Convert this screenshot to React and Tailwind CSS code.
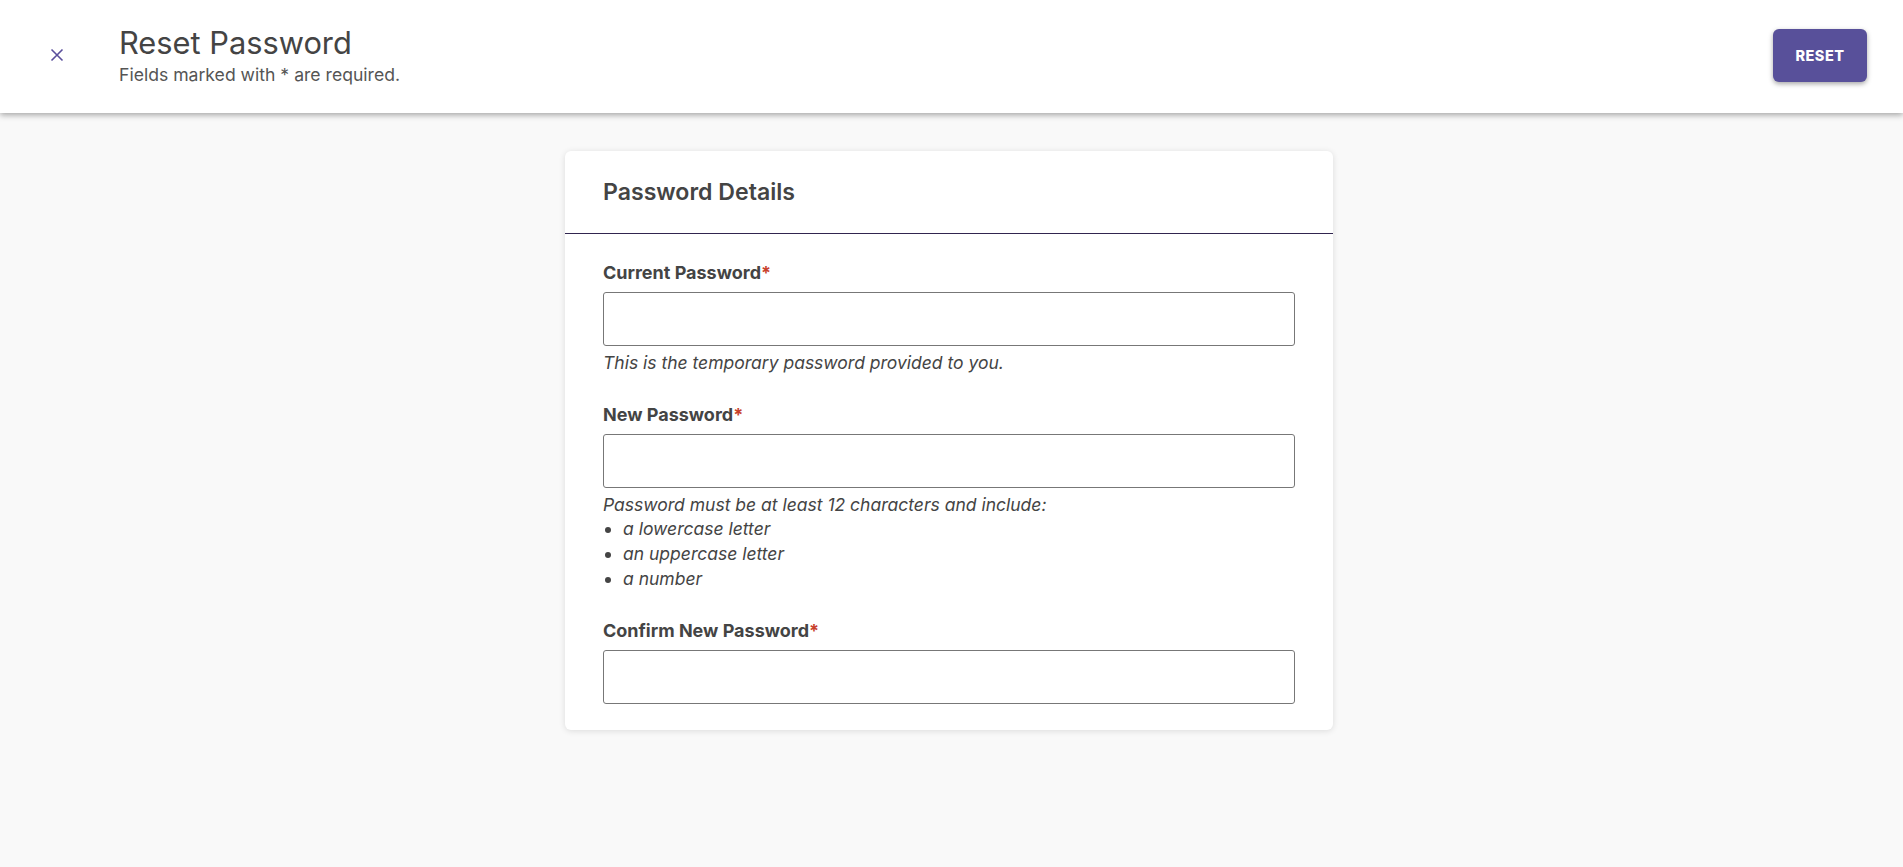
import React from 'react';

function Field({ label, help }) {
  return (
    <div>
      <label className="block text-[18px] leading-[24.6px] font-bold text-[#444]">
        {label}
        <span className="text-[#c8412b]">*</span>
      </label>
      <input
        type="password"
        className="mt-[6.5px] block w-full h-[54px] rounded-[3px] border border-[#777] bg-white px-3 outline-none"
      />
      {help}
    </div>
  );
}

export default function App() {
  return (
    <div className="min-h-screen bg-[#f9f9f9] font-['Inter',sans-serif] text-[#444]">
      {/* Header */}
      <header className="h-[113px] bg-white shadow-[0_2px_6px_rgba(0,0,0,0.35)] flex items-center pr-[36px] relative z-10">
        <button className="w-[119px] h-full flex items-center justify-center pr-[6px] pb-[3px] text-[#5a4f9c]">
          <svg width="14" height="14" viewBox="0 0 14 14" fill="none" stroke="currentColor" strokeWidth="1.6">
            <path d="M1.5 1.5 L12.5 12.5 M12.5 1.5 L1.5 12.5" />
          </svg>
        </button>
        <div className="flex-1">
          <h1 className="text-[30.8px] leading-9 font-normal text-[#444]">Reset Password</h1>
          <p className="mt-[2.5px] text-[17.6px] leading-[24.6px] text-[#555]">Fields marked with * are required.</p>
        </div>
        <button className="mb-[2px] w-[94px] h-[53px] rounded-[6px] bg-[#58509a] text-white text-[14.5px] font-extrabold tracking-[0.5px] shadow-[0_2px_5px_rgba(0,0,0,0.35)]">
          RESET
        </button>
      </header>

      {/* Card */}
      <main className="pt-[38px] pb-10 pr-[5px]">
        <div className="w-[768px] mx-auto bg-white rounded-[6px] shadow-[0_1px_6px_rgba(0,0,0,0.12)]">
          <div className="px-[38px] py-[25px] border-b border-[#31254f]">
            <h2 className="text-[23.1px] leading-8 font-semibold text-[#444]">Password Details</h2>
          </div>
          <div className="px-[38px] pt-[27px] pb-[26px] flex flex-col gap-[28px]">
            <Field
              label="Current Password"
              help={
                <p className="mt-[4.5px] text-[17.5px] leading-[24.6px] italic text-[#444]">
                  This is the temporary password provided to you.
                </p>
              }
            />
            <Field
              label="New Password"
              help={
                <div className="mt-[4.5px] text-[17.5px] leading-[24.6px] italic text-[#444]">
                  <p>Password must be at least 12 characters and include:</p>
                  <ul className="list-disc pl-[20px]">
                    <li>a lowercase letter</li>
                    <li>an uppercase letter</li>
                    <li>a number</li>
                  </ul>
                </div>
              }
            />
            <Field label="Confirm New Password" />
          </div>
        </div>
      </main>
    </div>
  );
}
